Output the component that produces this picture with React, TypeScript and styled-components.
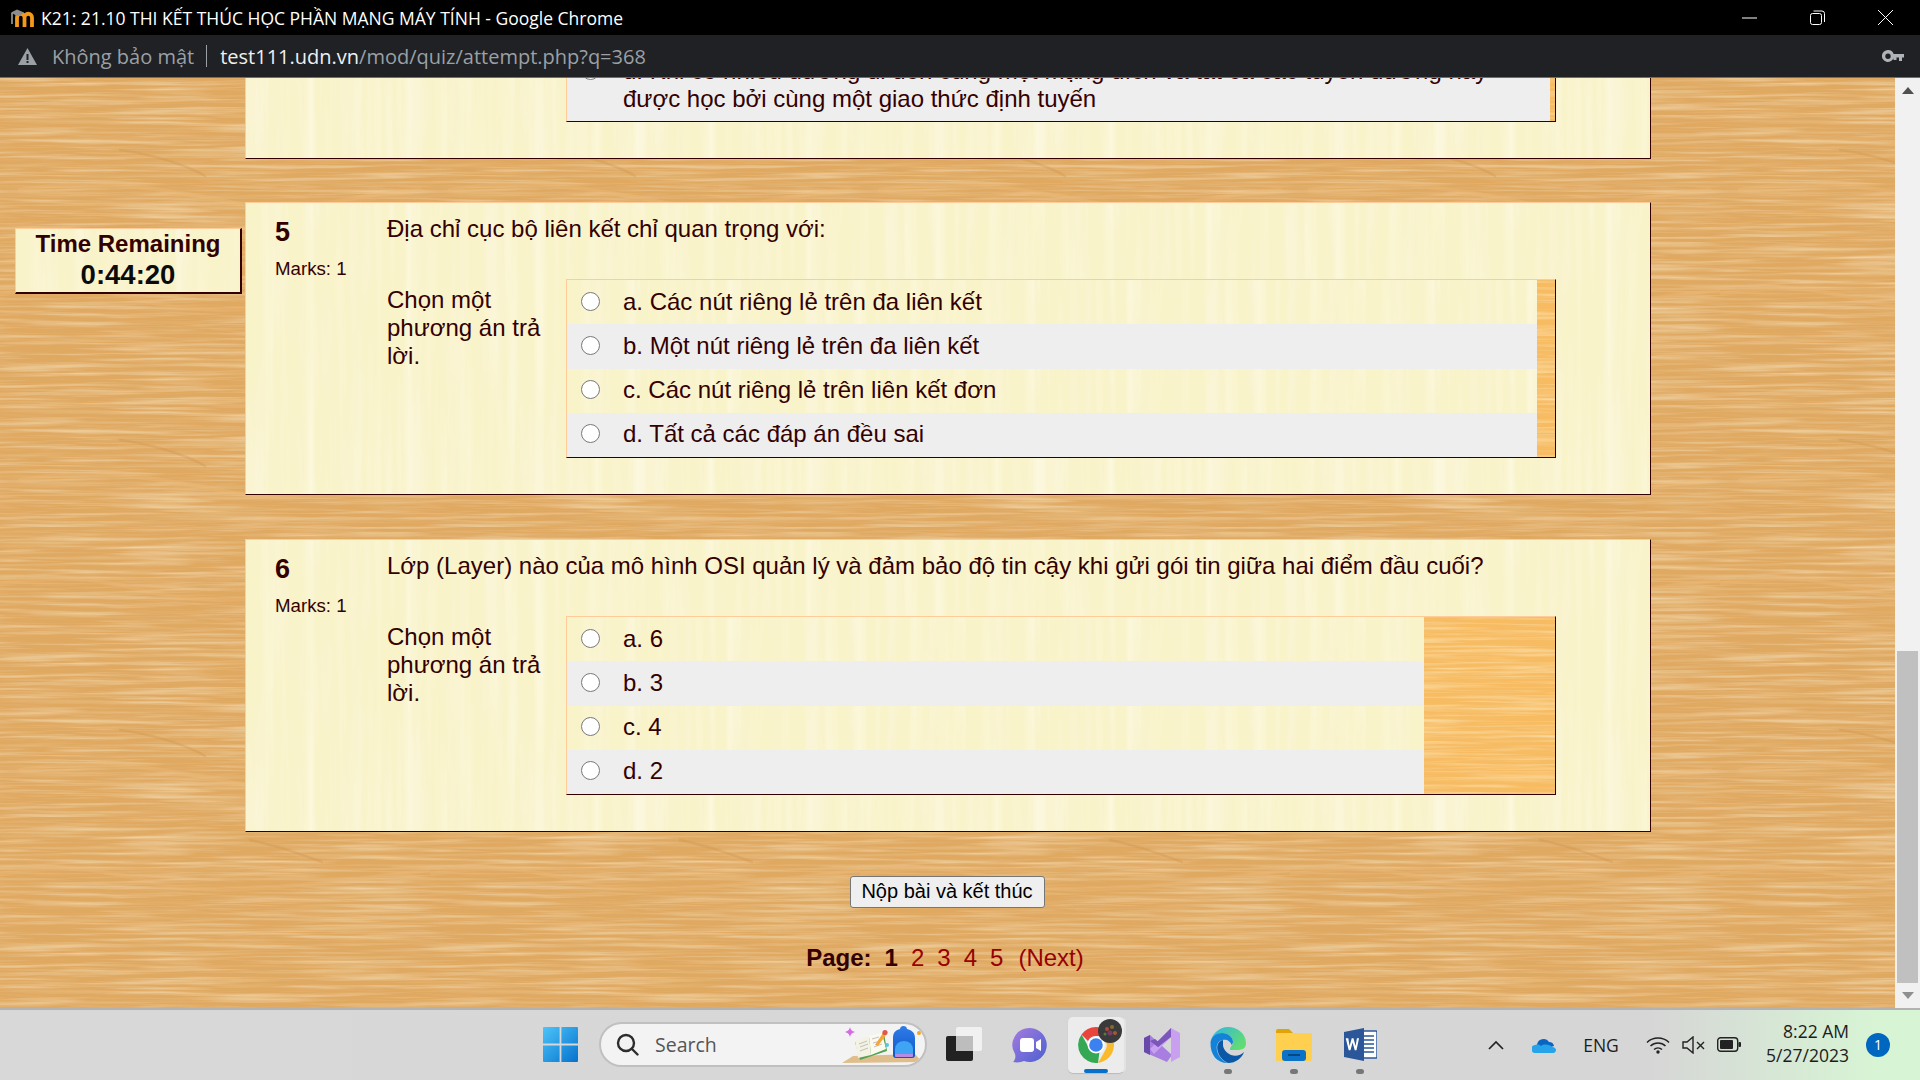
import React from "react";
import styled, { createGlobalStyle } from "styled-components";

const woodTexture = (
  w: number, h: number, fx: number, fy: number, base: string,
  dark: string, light: string, seed: number, k: number, o: number, extra = ""
) => {
  const hex = (c: string) => [1, 3, 5].map((i) => parseInt(c.slice(i, i + 2), 16) / 255);
  const mat = (c: string) => {
    const [r, g, b] = hex(c);
    return `0 0 0 0 ${r} 0 0 0 0 ${g} 0 0 0 0 ${b} ${k} 0 0 0 ${o}`;
  };
  const svg = `<svg xmlns='http://www.w3.org/2000/svg' width='${w}' height='${h}'><defs><filter id='a' x='0' y='0' width='100%' height='100%'><feTurbulence type='fractalNoise' baseFrequency='${fx} ${fy}' numOctaves='4' seed='${seed}' stitchTiles='stitch'/><feColorMatrix type='matrix' values='${mat(dark)}'/></filter><filter id='b' x='0' y='0' width='100%' height='100%'><feTurbulence type='fractalNoise' baseFrequency='${fx * 1.4} ${fy * 0.8}' numOctaves='3' seed='${seed + 7}' stitchTiles='stitch'/><feColorMatrix type='matrix' values='${mat(light)}'/></filter></defs><rect width='100%' height='100%' fill='${base}'/><rect width='100%' height='100%' filter='url(#a)'/><rect width='100%' height='100%' filter='url(#b)'/>${extra}</svg>`;
  return `url("data:image/svg+xml,${encodeURIComponent(svg)}")`;
};

const knots =
  "<g fill='none' stroke-linecap='round'>" +
  "<path d='M20 112 C90 100 150 108 230 124 S330 118 420 112' stroke='#eab876' stroke-width='4' opacity='.4'/>" +
  "<path d='M120 72 C150 76 185 86 205 98' stroke='#c98a3f' stroke-width='2.500' opacity='.28'/>" +
  "<path d='M0 216 C60 208 90 208 150 224 S300 228 430 212' stroke='#eab876' stroke-width='4' opacity='.35'/>" +
  "<path d='M250 182 C280 188 300 196 322 204' stroke='#c98a3f' stroke-width='2.500' opacity='.28'/>" +
  "</g>";

const pageWood = woodTexture(430, 290, 0.007, 0.3, "#e0a962", "#d09348", "#e6b472", 4, 1.6, -0.75, knots);
const cardWood = woodTexture(400, 400, 0.05, 0.004, "#f9f3c9", "#f5e9bf", "#fbf8d2", 9, 1.4, -0.65);
const stripWood = woodTexture(300, 200, 0.008, 0.35, "#f7bb62", "#ecae54", "#fbc26c", 12, 1.8, -0.85);

const Global = createGlobalStyle`
  html, body { margin: 0; padding: 0; height: 100%; overflow: hidden; }
  * { box-sizing: border-box; }
  #root { height: 100%; }
`;

const Screen = styled.div`
  height: 100vh;
  display: flex;
  flex-direction: column;
  font-family: "Liberation Sans", Arial, sans-serif;
  color: #300;
`;

const TitleBar = styled.header`
  height: 35px;
  flex: none;
  background: #000;
  color: #fff;
  display: flex;
  align-items: center;
  padding-left: 10px;
  font-family: "Open Sans", sans-serif;
  font-size: 17.5px;
`;

const TitleText = styled.span`
  margin-left: 6px;
  white-space: nowrap;
`;

const WindowButtons = styled.div`
  margin-left: auto;
  display: flex;
  align-items: center;
  padding-right: 27px;
  gap: 53px;
  height: 100%;
`;

const AddressBar = styled.div`
  height: 43px;
  flex: none;
  background: #202124;
  border-bottom: 1px solid #6e6f72;
  display: flex;
  align-items: center;
  padding: 0 16px 0 18px;
  font-family: "Open Sans", sans-serif;
  font-size: 20px;
  color: #9aa0a6;
`;

const NotSecure = styled.span`
  margin-left: 15px;
`;

const AddressDivider = styled.span`
  width: 1px;
  height: 22px;
  background: #9aa0a6;
  margin: 0 13px 0 12px;
`;

const Host = styled.span`
  color: #eef0f2;
`;

const KeyWrap = styled.span`
  margin-left: auto;
  display: flex;
`;

const PageArea = styled.main`
  flex: 1;
  min-height: 0;
  display: flex;
  overflow: hidden;
  background: ${pageWood};
`;

const SideColumn = styled.aside`
  width: 245px;
  flex: none;
  padding: 150px 3px 0 15px;
`;

const TimerBox = styled.div`
  height: 66px;
  background: ${cardWood};
  border: 1px solid #fc9;
  border-right: 2px solid #300;
  border-bottom: 2px solid #300;
  text-align: center;
  font-weight: 700;
`;

const TimerLabel = styled.div`
  font-size: 24px;
  line-height: 30px;
  color: #300;
`;

const TimerValue = styled.div`
  font-size: 27.5px;
  line-height: 31px;
  color: #0b0b0b;
`;

const Content = styled.div`
  width: 1406px;
  flex: none;
  display: flex;
  flex-direction: column;
  justify-content: flex-end;
  align-items: stretch;
  min-height: 0;
`;

const Card = styled.section`
  flex: none;
  display: flex;
  background: ${cardWood};
  border: 1px solid #fc9;
  border-right-color: #300;
  border-bottom-color: #300;
  padding: 12px 94px 36px 29px;
  margin-bottom: 44px;

  &:first-child {
    margin-bottom: 43px;
  }
`;

const InfoColumn = styled.div`
  width: 112px;
  flex: none;
`;

const QuestionNumber = styled.div`
  font-size: 27px;
  font-weight: 700;
  line-height: 34px;
`;

const Marks = styled.div`
  font-size: 18.7px;
  line-height: 22px;
  margin-top: 9px;
`;

const QuestionBody = styled.div`
  flex: 1;
  min-width: 0;
`;

const QuestionText = styled.div`
  font-size: 24px;
  line-height: 28px;
  min-height: 28px;
  margin-bottom: 36px;
`;

const AnswerLayout = styled.div`
  display: flex;
  align-items: flex-start;
`;

const Prompt = styled.div`
  width: 179px;
  flex: none;
  padding: 7px 14px 0 0;
  font-size: 24px;
  line-height: 28px;
`;

const AnswerBox = styled.div`
  flex: 1;
  min-width: 0;
  background: ${stripWood};
  border: 1px solid #fc9;
  border-right-color: #300;
  border-bottom-color: #300;
`;

const AnswerRow = styled.label<{ $width: number; $even: boolean }>`
  width: ${(p) => p.$width}px;
  min-height: 44.25px;
  display: flex;
  align-items: flex-start;
  padding: 7.5px 24px 8.5px 14px;
  font-size: 24px;
  line-height: 28px;
  background: ${(p) => (p.$even ? "#eee" : cardWood)};
`;

const Radio = styled.input`
  width: 19px;
  height: 19px;
  margin: 4px 23px 0 0;
  flex: none;
`;

const SubmitRow = styled.div`
  display: flex;
  justify-content: center;
  padding-right: 2px;
`;

const SubmitButton = styled.button`
  width: 195px;
  height: 32px;
  padding: 0 0 2px;
  background: #efefef;
  border: 1.5px solid #767676;
  border-radius: 3px;
  font-family: "Liberation Sans", Arial, sans-serif;
  font-size: 20px;
  color: #000;
`;

const Pager = styled.nav`
  height: 28px;
  margin: 36px 0 36px;
  padding-right: 6px;
  display: flex;
  justify-content: center;
  font-size: 24px;
  line-height: 28px;
  gap: 13px;
`;

const PagerLabel = styled.strong`
  font-weight: 700;
`;

const PagerCurrent = styled.strong`
  font-weight: 700;
`;

const PagerLink = styled.a`
  color: #900;
`;

const PagerNext = styled(PagerLink)`
  margin-left: 2px;
`;

const Scrollbar = styled.div`
  margin-left: auto;
  width: 25px;
  flex: none;
  background: #f1f1f1;
  display: flex;
  flex-direction: column;
  align-items: center;
`;

const ScrollArrow = styled.div`
  height: 25px;
  flex: none;
  display: flex;
  align-items: center;
  justify-content: center;
`;

const ScrollTrack = styled.div`
  flex: 1;
  width: 100%;
  display: flex;
  flex-direction: column;
  justify-content: flex-end;
  padding: 0 2px;
`;

const ScrollThumb = styled.div`
  height: 332px;
  background: #c0c0c0;
`;

const Taskbar = styled.footer`
  height: 72px;
  flex: none;
  display: flex;
  align-items: center;
  padding: 0 0 1px 527px;
  border-top: 2px solid #b2b2b2;
  background: linear-gradient(90deg, #d8d8d8 0, #d6d6d6 86%, #d7f5d4 98%);
  font-family: "Open Sans", sans-serif;
  color: #1c1c1c;
`;

const TaskSlot = styled.div<{ $active?: boolean }>`
  width: 66px;
  height: 56px;
  flex: none;
  position: relative;
  display: flex;
  align-items: center;
  justify-content: center;
  ${(p) => (p.$active ? "background: #ececec; border-radius: 5px; box-shadow: 3px 0 0 -1px #e2e2e2, 0 1px 1px #bbb; width: 56px; margin: 0 5px;" : "")}
`;

const RunDot = styled.span`
  position: absolute;
  bottom: -1px;
  left: 50%;
  margin-left: -4px;
  width: 8px;
  height: 5px;
  border-radius: 3px;
  background: #777;
`;

const ActiveBar = styled.span`
  position: absolute;
  bottom: 0;
  left: 16px;
  width: 24px;
  height: 4px;
  border-radius: 2px;
  background: #0a6fc9;
`;

const Avatar = styled.span`
  position: absolute;
  top: 2px;
  right: 2px;
  display: flex;
`;

const SearchPill = styled.div`
  width: 328px;
  height: 45px;
  flex: none;
  margin: 0 4px 0 6px;
  border: 2px solid #c0c0c0;
  border-radius: 23px;
  background: #f3f3f3;
  display: flex;
  align-items: center;
  padding-left: 15px;
  overflow: hidden;
  font-size: 19.5px;
  color: #555;
`;

const SearchLabel = styled.span`
  margin-left: 16px;
`;

const SearchArt = styled.span`
  margin-left: auto;
  display: flex;
  align-self: flex-end;
`;

const Tray = styled.div`
  margin-left: auto;
  display: flex;
  align-items: center;
  padding-right: 30px;
`;

const TrayItem = styled.div<{ $gap: number }>`
  margin-left: ${(p) => p.$gap}px;
  display: flex;
  align-items: center;
`;

const EngLabel = styled.span`
  width: 36px;
  font-size: 17.5px;
  text-align: center;
  white-space: nowrap;
`;

const TrayGroup = styled.div`
  display: flex;
  align-items: center;
  gap: 12px;
`;

const Clock = styled.div`
  width: 84px;
  text-align: right;
  font-size: 17.5px;
  line-height: 24px;
  padding-bottom: 3px;
  white-space: nowrap;
`;

const Badge = styled.span`
  width: 24px;
  height: 24px;
  border-radius: 50%;
  background: #0067c0;
  color: #fff;
  font-size: 14px;
  display: flex;
  align-items: center;
  justify-content: center;
`;

const MoodleIcon = () => (
  <svg width="25" height="20" viewBox="0 0 25 20">
    <path d="M7 19V9.500a3.200 3.200 0 0 1 7.500 0V19M14.500 9.500a3.200 3.200 0 0 1 7.500 0V19" fill="none" stroke="#f39a1c" strokeWidth="3.800" />
    <path d="M1 4.500L7 1.500l7 3-5 3.500-3-.5z" fill="#8d8d8d" />
    <path d="M2 5v11" stroke="#b5b5b5" strokeWidth="1.400" />
  </svg>
);

const Minimize = () => (
  <svg width="15" height="2" viewBox="0 0 15 2"><path d="M0 1h15" stroke="#fff" /></svg>
);

const Restore = () => (
  <svg width="15" height="15" viewBox="0 0 15 15" fill="none" stroke="#fff">
    <rect x="0.5" y="3.500" width="11" height="11" rx="2" />
    <path d="M3.500 1h8.500a2.500 2.500 0 0 1 2.500 2.500v8.500" />
  </svg>
);

const CloseX = () => (
  <svg width="15" height="15" viewBox="0 0 15 15"><path d="M0 0l15 15M15 0L0 15" stroke="#fff" /></svg>
);

const WarnIcon = () => (
  <svg width="19" height="17" viewBox="0 0 19 17">
    <path fillRule="evenodd" d="M9.500 0L19 17H0zM8.500 6v6h2V6zm0 7v2h2v-2z" fill="#9aa0a6" />
  </svg>
);

const KeyIcon = () => (
  <svg width="22" height="13" viewBox="0 0 22 13" fill="#b0b3b7">
    <path fillRule="evenodd" d="M6 0a6 6 0 0 1 5.700 4H22v3.500h-2V11h-3V7.500h-2.500V10h-3V8.200A6 6 0 1 1 6 0zm0 3.500a2.700 2.700 0 1 0 0 5.400 2.700 2.700 0 0 0 0-5.400z" />
  </svg>
);

const WinLogo = () => (
  <svg width="35" height="35" viewBox="0 0 35 35">
    <defs>
      <linearGradient id="wl" x1="0" y1="0" x2="1" y2="1">
        <stop offset="0" stopColor="#4dc4fa" />
        <stop offset="1" stopColor="#0672cc" />
      </linearGradient>
    </defs>
    <path d="M0 1a1 1 0 0 1 1-1h15.600v16.600H0zM18.400 0H34a1 1 0 0 1 1 1v15.600H18.400zM0 18.400h16.600V35H1a1 1 0 0 1-1-1zM18.400 18.400H35V34a1 1 0 0 1-1 1H18.400z" fill="url(#wl)" />
  </svg>
);

const SearchGlass = () => (
  <svg width="23" height="23" viewBox="0 0 23 23" fill="none" stroke="#2c2c2c" strokeWidth="2.400" strokeLinecap="round">
    <circle cx="10" cy="10" r="8" />
    <path d="M16 16l5.500 5.500" />
  </svg>
);

const SearchIllustration = () => (
  <svg width="85" height="41" viewBox="0 0 85 41">
    <defs>
      <linearGradient id="bp" x1="0" y1="0" x2="0" y2="1">
        <stop offset="0" stopColor="#2f7de8" />
        <stop offset="1" stopColor="#0d55c8" />
      </linearGradient>
    </defs>
    <path d="M2 39L13 32 75 30 82 38z" fill="#e0bd8c" />
    <path d="M15 18L44 9 47 27 20 36z" fill="#55a351" />
    <path d="M15 17L29 12 31 31 18 34z" fill="#f4f2e2" />
    <path d="M29 12L42 9 46 25 31 31z" fill="#fbfaf0" />
    <path d="M19 20l8-3M20 23l8-3M20 27l8-3M32 15l7-2M33 19l7-2M34 23l8-3" stroke="#a9a9a9" strokeWidth="0.700" />
    <path d="M35 21L43 9 46 11 38 22z" fill="#f5a63a" />
    <circle cx="45" cy="8.500" r="2.600" fill="#e0564c" />
    <path d="M10 3c.8 3 1.800 4 5 5-3.200 1-4.200 2-5 5-.8-3-1.800-4-5-5 3.200-1 4.200-2 5-5z" fill="#d768e6" />
    <path d="M53 31V14c0-6 3-8 7-9 0-4 7-4 7 0 4 1 8 3 8 9v17c0 2-1 3-3 3H56c-2 0-3-1-3-3z" fill="url(#bp)" />
    <path d="M55 25a9 8 0 0 1 18 0v5H55z" fill="#3fa4f3" />
    <path d="M55 30h18v2a1 1 0 0 1-1 1H56a1 1 0 0 1-1-1z" fill="#b68be8" />
    <circle cx="79" cy="9" r="2" fill="#f5a623" />
    <circle cx="47" cy="21" r="2" fill="#54c8e0" />
  </svg>
);

const TaskViewIcon = () => (
  <svg width="36" height="36" viewBox="0 0 36 36">
    <rect x="10" y="0" width="26" height="24" rx="2" fill="#fafafa" opacity=".75" />
    <rect x="0" y="9" width="27" height="25" rx="2" fill="#222" />
    <rect x="10" y="9" width="17" height="15" fill="#bdbdbd" />
  </svg>
);

const TeamsIcon = () => (
  <svg width="36" height="36" viewBox="0 0 36 36">
    <defs>
      <linearGradient id="tm" x1="0" y1="0" x2="1" y2="1">
        <stop offset="0" stopColor="#a67be0" />
        <stop offset="1" stopColor="#4a60d0" />
      </linearGradient>
    </defs>
    <path d="M18 1a17 17 0 1 1-6 33c-3 1-6 2-11 1 2-2 3-5 2-8A17 17 0 0 1 18 1z" fill="url(#tm)" />
    <rect x="8" y="11" width="14" height="14" rx="3" fill="#fff" />
    <path d="M24 15l5-3v12l-5-3z" fill="#fff" />
  </svg>
);

const ChromeIcon = () => (
  <svg width="36" height="36" viewBox="0 0 36 36">
    <path d="M18 0a18 18 0 0 1 15.600 9H18a9 9 0 0 0-8 5L3.500 7.500A18 18 0 0 1 18 0z" fill="#e8453c" />
    <path d="M33.600 9A18 18 0 0 1 20 35.900l7-12.200A9 9 0 0 0 25 11z" fill="#f9bb2d" />
    <path d="M20 35.900A18 18 0 0 1 3.500 7.500L10.500 20a9 9 0 0 0 11 4.500z" fill="#34a853" />
    <circle cx="18" cy="18" r="8.500" fill="#fff" />
    <circle cx="18" cy="18" r="6.800" fill="#3b82f0" />
  </svg>
);

const AvatarIcon = () => (
  <svg width="24" height="24" viewBox="0 0 24 24">
    <circle cx="12" cy="12" r="12" fill="#3a3a3a" />
    <circle cx="9" cy="10" r="2" fill="#b04a3a" />
    <circle cx="14" cy="8" r="2" fill="#8a6a2a" />
    <circle cx="12" cy="14" r="2.500" fill="#7a3a6a" />
    <circle cx="17" cy="14" r="2" fill="#a05a30" />
    <circle cx="7" cy="15" r="1.500" fill="#5a7a3a" />
  </svg>
);

const VsIcon = () => (
  <svg width="36" height="36" viewBox="0 0 36 36">
    <path d="M0 11l6-3 22 20-5 7L0 25z" fill="#a87fe0" />
    <path d="M0 11l6-3v20l-6-3z" fill="#6a4aa8" />
    <path d="M6 22L27 1l9 5v24l-9 5V10L10 27z" fill="#c9a0f0" />
    <path d="M6 14l5-2 6 5-3 3z" fill="#7a57b8" />
    <path d="M27 1v9L14 20l-3-3z" fill="#7a57b8" />
  </svg>
);

const EdgeIcon = () => (
  <svg width="36" height="36" viewBox="0 0 36 36">
    <defs>
      <linearGradient id="eg" x1="0" y1="0" x2="1" y2="0.600">
        <stop offset="0" stopColor="#2fb4e6" />
        <stop offset="1" stopColor="#62dc72" />
      </linearGradient>
    </defs>
    <path d="M18 0C28 0 36 7 36 16c0 5-3 7-9 7h-7c-.2-4 3-4 3-8 0-5-5-9-11-9C7 6 2 11 .5 15 2 7 9 0 18 0z" fill="url(#eg)" />
    <path d="M.5 15C2 9 7 6 12 6c6 0 11 4 11 9 0 1-.5 2-1.500 3-1-4-5-6-9-5-5 1-7 6-5 12 1 4 5 9 10 11C7 36 0 28 .5 15z" fill="#1283d8" />
    <path d="M13 13c-5 1-7 6-5 12 1 4 5 9 10 11 8 0 14-5 16-11-3 3-8 5-13 3-5-2-8-7-8-10 0-2 0-4 0-5z" fill="#0b58a6" />
  </svg>
);

const FolderIcon = () => (
  <svg width="36" height="32" viewBox="0 0 36 32">
    <path d="M0 2a2 2 0 0 1 2-2h11l4 4h-17z" fill="#e0a406" />
    <rect x="0" y="4" width="36" height="28" rx="1" fill="#ffd04f" />
    <rect x="6" y="21" width="24" height="11" rx="3" fill="#0b72c8" />
    <path d="M12 26h12" stroke="#06386a" strokeWidth="1.500" />
  </svg>
);

const WordIcon = () => (
  <svg width="33" height="33" viewBox="0 0 33 33">
    <rect x="15" y="3" width="18" height="27" rx="1" fill="#fff" stroke="#2b579a" strokeWidth="1.500" />
    <path d="M19 8h11M19 12h11M19 16h11M19 20h11M19 24h11" stroke="#2b579a" strokeWidth="1.500" />
    <path d="M0 4l20-4v33l-20-4z" fill="#2b579a" />
    <path d="M3 11h3l1.500 9L10 11h2l2.500 9L16 11h2.500l-3 14h-2L11 16l-2.500 9h-2z" fill="#fff" transform="scale(.86) translate(-1 1)" />
  </svg>
);

const Chevron = () => (
  <svg width="16" height="10" viewBox="0 0 16 10" fill="none" stroke="#222" strokeWidth="1.700"><path d="M1 9l7-7 7 7" /></svg>
);

const CloudIcon = () => (
  <svg width="24" height="16" viewBox="0 0 24 16">
    <path d="M5 8a6.500 6.500 0 0 1 12-3 5 5 0 0 1 5 4l-9 3-8-1z" fill="#0a64c0" />
    <path d="M4 16a4 4 0 0 1-1-8c3-1 5 0 6 1 3-3 10-1 11 1 3 0 4 2 4 3s-1 3-3 3z" fill="#27a3ea" />
  </svg>
);

const WifiIcon = () => (
  <svg width="24" height="18" viewBox="0 0 24 18" fill="none" stroke="#222" strokeWidth="1.500">
    <path d="M1 6.500a16 16 0 0 1 22 0M4.500 10a11 11 0 0 1 15 0M8 13.500a6 6 0 0 1 8 0" />
    <circle cx="12" cy="16" r="1.700" fill="#222" stroke="none" />
  </svg>
);

const MuteIcon = () => (
  <svg width="23" height="18" viewBox="0 0 23 18" fill="none" stroke="#222" strokeWidth="1.400">
    <path d="M1 6h4l6-5v16l-6-5H1zM15 6l7 7M22 6l-7 7" />
  </svg>
);

const BatteryIcon = () => (
  <svg width="24" height="15" viewBox="0 0 24 15">
    <rect x="0.700" y="0.700" width="20" height="13.600" rx="3" fill="none" stroke="#222" strokeWidth="1.400" />
    <rect x="3" y="3" width="13" height="9" rx="1" fill="#222" />
    <rect x="21.500" y="5" width="2.500" height="5" rx="1" fill="#222" />
  </svg>
);

type Option = { label: string };

const Question = ({
  number, text, options, rowWidth,
}: { number: string; text: string; options: Option[]; rowWidth: number }) => (
  <Card>
    <InfoColumn>
      <QuestionNumber>{number}</QuestionNumber>
      <Marks>Marks: 1</Marks>
    </InfoColumn>
    <QuestionBody>
      <QuestionText>{text}</QuestionText>
      <AnswerLayout>
        <Prompt>Chọn một phương án trả lời.</Prompt>
        <AnswerBox>
          {options.map((o, i) => (
            <AnswerRow key={o.label} $width={rowWidth} $even={i % 2 === 1}>
              <Radio type="radio" name={`q${number}`} />
              <span>{o.label}</span>
            </AnswerRow>
          ))}
        </AnswerBox>
      </AnswerLayout>
    </QuestionBody>
  </Card>
);

const q4 = [
  { label: "a." },
  { label: "b." },
  { label: "c." },
  { label: "d. Khi có nhiều đường đi đến cùng một mạng đích và tất cả các tuyến đường này được học bởi cùng một giao thức định tuyến" },
];
const q5 = [
  { label: "a. Các nút riêng lẻ trên đa liên kết" },
  { label: "b. Một nút riêng lẻ trên đa liên kết" },
  { label: "c. Các nút riêng lẻ trên liên kết đơn" },
  { label: "d. Tất cả các đáp án đều sai" },
];
const q6 = [{ label: "a. 6" }, { label: "b. 3" }, { label: "c. 4" }, { label: "d. 2" }];

export default function App() {
  return (
    <Screen>
      <Global />
      <TitleBar>
        <MoodleIcon />
        <TitleText>K21: 21.10 THI KẾT THÚC HỌC PHẦN MẠNG MÁY TÍNH - Google Chrome</TitleText>
        <WindowButtons>
          <Minimize />
          <Restore />
          <CloseX />
        </WindowButtons>
      </TitleBar>
      <AddressBar>
        <WarnIcon />
        <NotSecure>Không bảo mật</NotSecure>
        <AddressDivider />
        <span><Host>test111.udn.vn</Host>/mod/quiz/attempt.php?q=368</span>
        <KeyWrap><KeyIcon /></KeyWrap>
      </AddressBar>
      <PageArea>
        <SideColumn>
          <TimerBox>
            <TimerLabel>Time Remaining</TimerLabel>
            <TimerValue>0:44:20</TimerValue>
          </TimerBox>
        </SideColumn>
        <Content>
          <Question number="4" text="" options={q4} rowWidth={983} />
          <Question
            number="5"
            text="Địa chỉ cục bộ liên kết chỉ quan trọng với:"
            options={q5}
            rowWidth={970}
          />
          <Question
            number="6"
            text="Lớp (Layer) nào của mô hình OSI quản lý và đảm bảo độ tin cậy khi gửi gói tin giữa hai điểm đầu cuối?"
            options={q6}
            rowWidth={857}
          />
          <SubmitRow>
            <SubmitButton>Nộp bài và kết thúc</SubmitButton>
          </SubmitRow>
          <Pager>
            <PagerLabel>Page:</PagerLabel>
            <PagerCurrent>1</PagerCurrent>
            <PagerLink>2</PagerLink>
            <PagerLink>3</PagerLink>
            <PagerLink>4</PagerLink>
            <PagerLink>5</PagerLink>
            <PagerNext>(Next)</PagerNext>
          </Pager>
        </Content>
        <Scrollbar>
          <ScrollArrow>
            <svg width="12" height="7" viewBox="0 0 12 7"><path d="M6 0l6 7H0z" fill="#505050" /></svg>
          </ScrollArrow>
          <ScrollTrack><ScrollThumb /></ScrollTrack>
          <ScrollArrow>
            <svg width="12" height="7" viewBox="0 0 12 7"><path d="M6 7L12 0H0z" fill="#8f8f8f" /></svg>
          </ScrollArrow>
        </Scrollbar>
      </PageArea>
      <Taskbar>
        <TaskSlot><WinLogo /></TaskSlot>
        <SearchPill>
          <SearchGlass />
          <SearchLabel>Search</SearchLabel>
          <SearchArt><SearchIllustration /></SearchArt>
        </SearchPill>
        <TaskSlot><TaskViewIcon /></TaskSlot>
        <TaskSlot><TeamsIcon /></TaskSlot>
        <TaskSlot $active>
          <ChromeIcon />
          <Avatar><AvatarIcon /></Avatar>
          <ActiveBar />
        </TaskSlot>
        <TaskSlot><VsIcon /></TaskSlot>
        <TaskSlot><EdgeIcon /><RunDot /></TaskSlot>
        <TaskSlot><FolderIcon /><RunDot /></TaskSlot>
        <TaskSlot><WordIcon /><RunDot /></TaskSlot>
        <Tray>
          <TrayItem $gap={0}><Chevron /></TrayItem>
          <TrayItem $gap={28}><CloudIcon /></TrayItem>
          <TrayItem $gap={27}><EngLabel>ENG</EngLabel></TrayItem>
          <TrayItem $gap={27}>
            <TrayGroup>
              <WifiIcon />
              <MuteIcon />
              <BatteryIcon />
            </TrayGroup>
          </TrayItem>
          <TrayItem $gap={24}>
            <Clock>8:22 AM<br />5/27/2023</Clock>
          </TrayItem>
          <TrayItem $gap={17}><Badge>1</Badge></TrayItem>
        </Tray>
      </Taskbar>
    </Screen>
  );
}
